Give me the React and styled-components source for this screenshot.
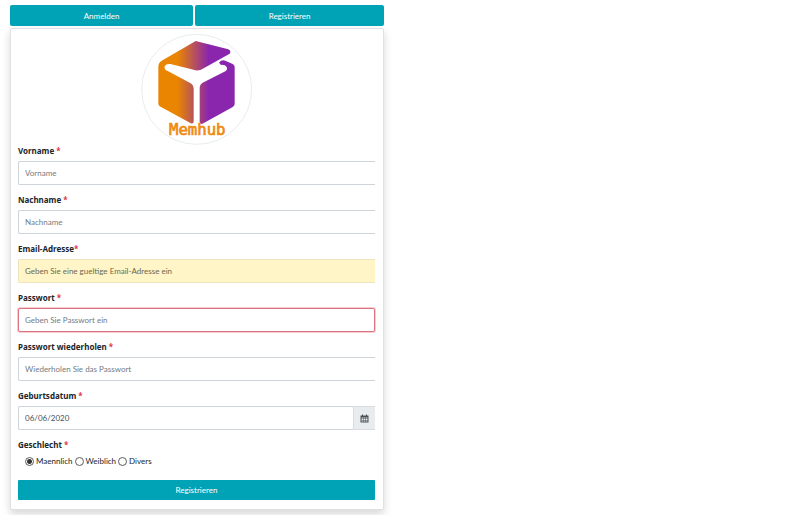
import React from "react";
import styled, { createGlobalStyle, css } from "styled-components";

const GlobalStyle = createGlobalStyle`
  *, *::before, *::after { box-sizing: border-box; }
  body {
    margin: 0;
    background: #fff;
    color: #212529;
    font-family: Lato, "Noto Sans", sans-serif;
    font-size: 8px;
    line-height: 12px;
  }
`;

const Page = styled.main`
  width: 50%;
  padding: 5px 16px 5px 10px;
`;

const Tabs = styled.nav`
  display: flex;
  gap: 2px;
  margin-bottom: 2px;
`;

const Button = styled.button`
  flex: ${(p) => p.$grow || 1} 1 0;
  height: ${(p) => (p.$tab ? 21 : 20)}px;
  padding: 0 6px;
  border: 0;
  border-radius: ${(p) => (p.$tab ? 2 : 1)}px;
  background: #00a2b5;
  color: #fff;
  font: inherit;
  cursor: pointer;
`;

const Card = styled.form`
  display: flex;
  flex-direction: column;
  padding: 5px 8px 9px 7px;
  border: 1px solid #dfe1e3;
  border-radius: 2px;
  background: #fff;
  box-shadow: 0 4px 8px rgba(0, 0, 0, 0.16);
`;

const Logo = styled.svg`
  display: block;
  align-self: center;
  width: 111px;
  height: 111px;
`;

const Wordmark = styled.text`
  font-family: "DejaVu Sans Mono", monospace;
  font-size: 47px;
  fill: #ee8a10;
  stroke: #ee8a10;
  stroke-width: 2px;
`;

const Group = styled.div`
  margin-bottom: 9px;
`;

const labelStyle = css`
  display: block;
  margin-bottom: 4px;
  padding: 0;
  font-family: "Noto Sans", sans-serif;
  font-weight: 700;
`;

const Label = styled.label`
  ${labelStyle}
`;

const Required = styled.span`
  color: #dc3545;
`;

const Input = styled.input`
  display: block;
  flex: 1;
  width: 100%;
  min-width: 0;
  height: 24px;
  padding: 0 6px;
  border: 1px solid #ced4da;
  border-right-width: 0;
  border-radius: 2px 0 0 2px;
  outline: 0;
  background: #fff;
  color: #495057;
  font: inherit;
  &::placeholder { color: #747b82; opacity: 1; }

  ${(p) => p.$state === "filled" && css`
    background: #fff5c6;
    border-color: #eee5bd;
    &::placeholder { color: #6c684f; }
  `}
  ${(p) => p.$state === "invalid" && css`
    border: 1px solid #dc7482;
    border-radius: 2px;
    box-shadow: 0 0 0 1px rgba(220, 53, 69, 0.25);
  `}
`;

const InputGroup = styled.div`
  display: flex;
`;

const DateButton = styled.button`
  display: grid;
  place-items: center;
  width: 22px;
  height: 24px;
  padding: 0;
  border: 1px solid #d8dde2;
  border-right: 0;
  background: #e9ecef;
  color: #495057;
`;

const Fieldset = styled.fieldset`
  min-width: 0;
  margin: 0 0 13px;
  padding: 0;
  border: 0;
`;

const Legend = styled.legend`
  ${labelStyle}
`;

const Choices = styled.div`
  display: flex;
  gap: 2px;
  padding-left: 7px;
`;

const Choice = styled.label`
  display: flex;
  align-items: center;
  gap: 2px;
`;

const Radio = styled.input`
  appearance: none;
  width: 9px;
  height: 9px;
  margin: 0;
  border: 1px solid #5c5c5c;
  border-radius: 50%;
  background: #fff;
  &:checked { background: radial-gradient(circle, #333 0 2px, #fff 3px); }
`;

const Actions = styled.div`
  display: flex;
`;

function MemhubLogo() {
  return (
    <Logo viewBox="16 12 333 333" role="img" aria-label="Memhub">
      <defs>
        <linearGradient id="cubeFill" gradientUnits="userSpaceOnUse" x1="68" y1="0" x2="297" y2="0">
          <stop offset="0.25" stopColor="#e98500" />
          <stop offset="0.66" stopColor="#8a25ad" />
        </linearGradient>
      </defs>
      <circle cx="183" cy="178" r="165" fill="#fff" stroke="#d9e2e5" strokeWidth="2" />
      <g fill="url(#cubeFill)">
        <path d="M180 33 L278 58 Q288 63 282 71 L196 119 Q183 124 168 118 L104 102 Q92 100 87 109 Q84 119 96 123 L165 160 Q174 165 174 174 V273 Q174 284 164 279 L72 229 Q68 226 68 220 V111 Q68 98 78 92 Z" />
        <path d="M250 98 Q258 88 269 92 L291 102 Q297 105 297 112 V222 Q297 228 290 232 L203 280 Q192 286 192 273 V174 Q192 163 201 158 L269 124 Q277 118 273 111 Q267 103 256 105 Z" />
      </g>
      <Wordmark x="100" y="316">Memhub</Wordmark>
    </Logo>
  );
}

function CalendarIcon() {
  return (
    <svg width="9" height="9" viewBox="0 0 18 18" aria-hidden="true">
      <path
        fill="currentColor"
        fillRule="evenodd"
        d="M1 3h3V1h2v2h6V1h2v2h3v14H1zM3 7v2h3V7zm4 0v2h4V7zm5 0v2h3V7zM3 10v2h3v-2zm4 0v2h4v-2zm5 0v2h3v-2zM3 13v2h3v-2zm4 0v2h4v-2zm5 0v2h3v-2z"
      />
    </svg>
  );
}

function Field({ id, label, tight, addon, ...input }) {
  return (
    <Group>
      <Label htmlFor={id}>
        {label}
        {tight ? "" : " "}
        <Required>*</Required>
      </Label>
      <InputGroup>
        <Input id={id} {...input} />
        {addon}
      </InputGroup>
    </Group>
  );
}

export default function App() {
  return (
    <>
      <GlobalStyle />
      <Page>
        <Tabs>
          <Button type="button" $tab $grow={30}>Anmelden</Button>
          <Button type="button" $tab $grow={31}>Registrieren</Button>
        </Tabs>
        <Card onSubmit={(e) => e.preventDefault()}>
          <MemhubLogo />
          <Field id="vorname" label="Vorname" placeholder="Vorname" />
          <Field id="nachname" label="Nachname" placeholder="Nachname" />
          <Field
            id="email"
            type="email"
            label="Email-Adresse"
            tight
            placeholder="Geben Sie eine gueltige Email-Adresse ein"
            $state="filled"
          />
          <Field
            id="passwort"
            type="password"
            label="Passwort"
            placeholder="Geben Sie Passwort ein"
            $state="invalid"
          />
          <Field
            id="passwort2"
            type="password"
            label="Passwort wiederholen"
            placeholder="Wiederholen Sie das Passwort"
          />
          <Field
            id="geburtsdatum"
            label="Geburtsdatum"
            defaultValue="06/06/2020"
            addon={
              <DateButton type="button" aria-label="Kalender">
                <CalendarIcon />
              </DateButton>
            }
          />
          <Fieldset>
            <Legend>
              Geschlecht <Required>*</Required>
            </Legend>
            <Choices>
              <Choice><Radio type="radio" name="geschlecht" defaultChecked />Maennlich</Choice>
              <Choice><Radio type="radio" name="geschlecht" />Weiblich</Choice>
              <Choice><Radio type="radio" name="geschlecht" />Divers</Choice>
            </Choices>
          </Fieldset>
          <Actions>
            <Button type="submit">Registrieren</Button>
          </Actions>
        </Card>
      </Page>
    </>
  );
}
